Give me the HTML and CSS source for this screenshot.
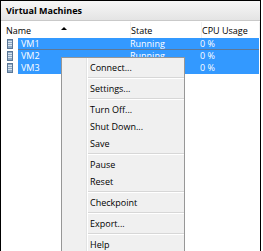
FILE: index.html
```html
<!DOCTYPE html>
<html lang="en">
<head>
  <meta charset="UTF-8" />
  <meta name="viewport" content="width=device-width, initial-scale=1.0" />
  <title>Virtual Machines</title>
  <link rel="stylesheet" href="styles.css">
</head>
<body>

  <div class="panel">
    <div class="title">Virtual Machines</div>

    <div class="list">
      <div class="head">
        <div class="col col-name">Name <span class="sort"></span></div>
        <div class="col col-state">State</div>
        <div class="col col-cpu">CPU Usage</div>
      </div>

      <div class="row focus">
        <svg class="vm-icon" width="6" height="10" viewBox="0 0 6 10">
          <rect x="0.5" y="0.5" width="5" height="9" fill="#8fa9c4" stroke="#5b7796"/>
          <path d="M1 2.5h4M1 4.5h4M1 6.5h4" stroke="#d8e4ef"/>
        </svg>
        <div class="cells">
          <div class="col col-name">VM1</div>
          <div class="col col-state">Running</div>
          <div class="col col-cpu">0 %</div>
        </div>
      </div>
      <div class="row">
        <svg class="vm-icon" width="6" height="10" viewBox="0 0 6 10">
          <rect x="0.5" y="0.5" width="5" height="9" fill="#8fa9c4" stroke="#5b7796"/>
          <path d="M1 2.5h4M1 4.5h4M1 6.5h4" stroke="#d8e4ef"/>
        </svg>
        <div class="cells">
          <div class="col col-name">VM2</div>
          <div class="col col-state">Running</div>
          <div class="col col-cpu">0 %</div>
        </div>
      </div>
      <div class="row">
        <svg class="vm-icon" width="6" height="10" viewBox="0 0 6 10">
          <rect x="0.5" y="0.5" width="5" height="9" fill="#8fa9c4" stroke="#5b7796"/>
          <path d="M1 2.5h4M1 4.5h4M1 6.5h4" stroke="#d8e4ef"/>
        </svg>
        <div class="cells">
          <div class="col col-name">VM3</div>
          <div class="col col-state">Running</div>
          <div class="col col-cpu">0 %</div>
        </div>
      </div>
    </div>
  </div>

  <!-- context menu over the selected rows -->
  <ul class="menu">
    <li>Connect...</li>
    <li class="sep"></li>
    <li>Settings...</li>
    <li class="sep"></li>
    <li>Turn Off...</li>
    <li>Shut Down...</li>
    <li>Save</li>
    <li class="sep"></li>
    <li>Pause</li>
    <li>Reset</li>
    <li class="sep"></li>
    <li>Checkpoint</li>
    <li class="sep"></li>
    <li>Export...</li>
    <li class="sep"></li>
    <li>Help</li>
  </ul>

</body>
</html>
```

FILE: styles.css
```css
body {
  margin: 0;
  background: #fff;
  font-family: 'Open Sans', 'Noto Sans', sans-serif;
  font-size: 9px;
  color: #000;
  overflow: hidden;
}
.panel {
  width: 261px;
  height: 251px;
  box-sizing: border-box;
  border: 1px solid #000;
  border-bottom: none;
}
.title {
  height: 19px;
  line-height: 19px;
  padding-left: 5px;
  font-weight: bold;
  background: linear-gradient(#f7f7f7, #e4e4e4);
  border-bottom: 1px solid #c9c9c9;
}
.list {
  padding-top: 1px;
}
.head {
  display: flex;
  height: 16px;
  line-height: 18px;
  padding-left: 5px;
}
.head .col { border-right: 1px solid #f0f0f0; }
.col-name { width: 124px; display: flex; }
.col-state { width: 70px; }
.col-cpu { flex: 1; }
.sort {
  width: 0;
  height: 0;
  margin: 5px 0 0 30px;
  border-left: 3px solid transparent;
  border-right: 3px solid transparent;
  border-bottom: 3px solid #000;
}
.row {
  display: flex;
  align-items: center;
  height: 12px;
  padding-left: 6px;
}
.vm-icon { flex: none; }
.cells {
  display: flex;
  flex: 1;
  height: 12px;
  line-height: 12px;
  margin-left: 5px;
  margin-right: 1px;
  padding-left: 3px;
  background: #3399ff;
  color: #fff;
}
.cells .col-name { width: 109px; }
.focus .cells { box-shadow: inset 0 -1px 0 #5d7898; }
.menu {
  position: absolute;
  left: 61px;
  top: 57px;
  width: 124px;
  height: 200px;
  box-sizing: border-box;
  margin: 0;
  padding: 1px 0 0;
  list-style: none;
  background: #f0f0f0 linear-gradient(90deg, transparent 24px, #e2e3e3 24px, #e2e3e3 25px, #fff 25px, #fff 26px, transparent 26px);
  border: 1px solid #979797;
  border-bottom: none;
}
.menu li {
  height: 17px;
  line-height: 17px;
  padding-left: 28px;
}
.menu li.sep {
  height: 0;
  margin: 1px 0 1px 26px;
  padding: 0;
  border-top: 1px solid #d7d7d7;
  border-bottom: 1px solid #fff;
}
```
